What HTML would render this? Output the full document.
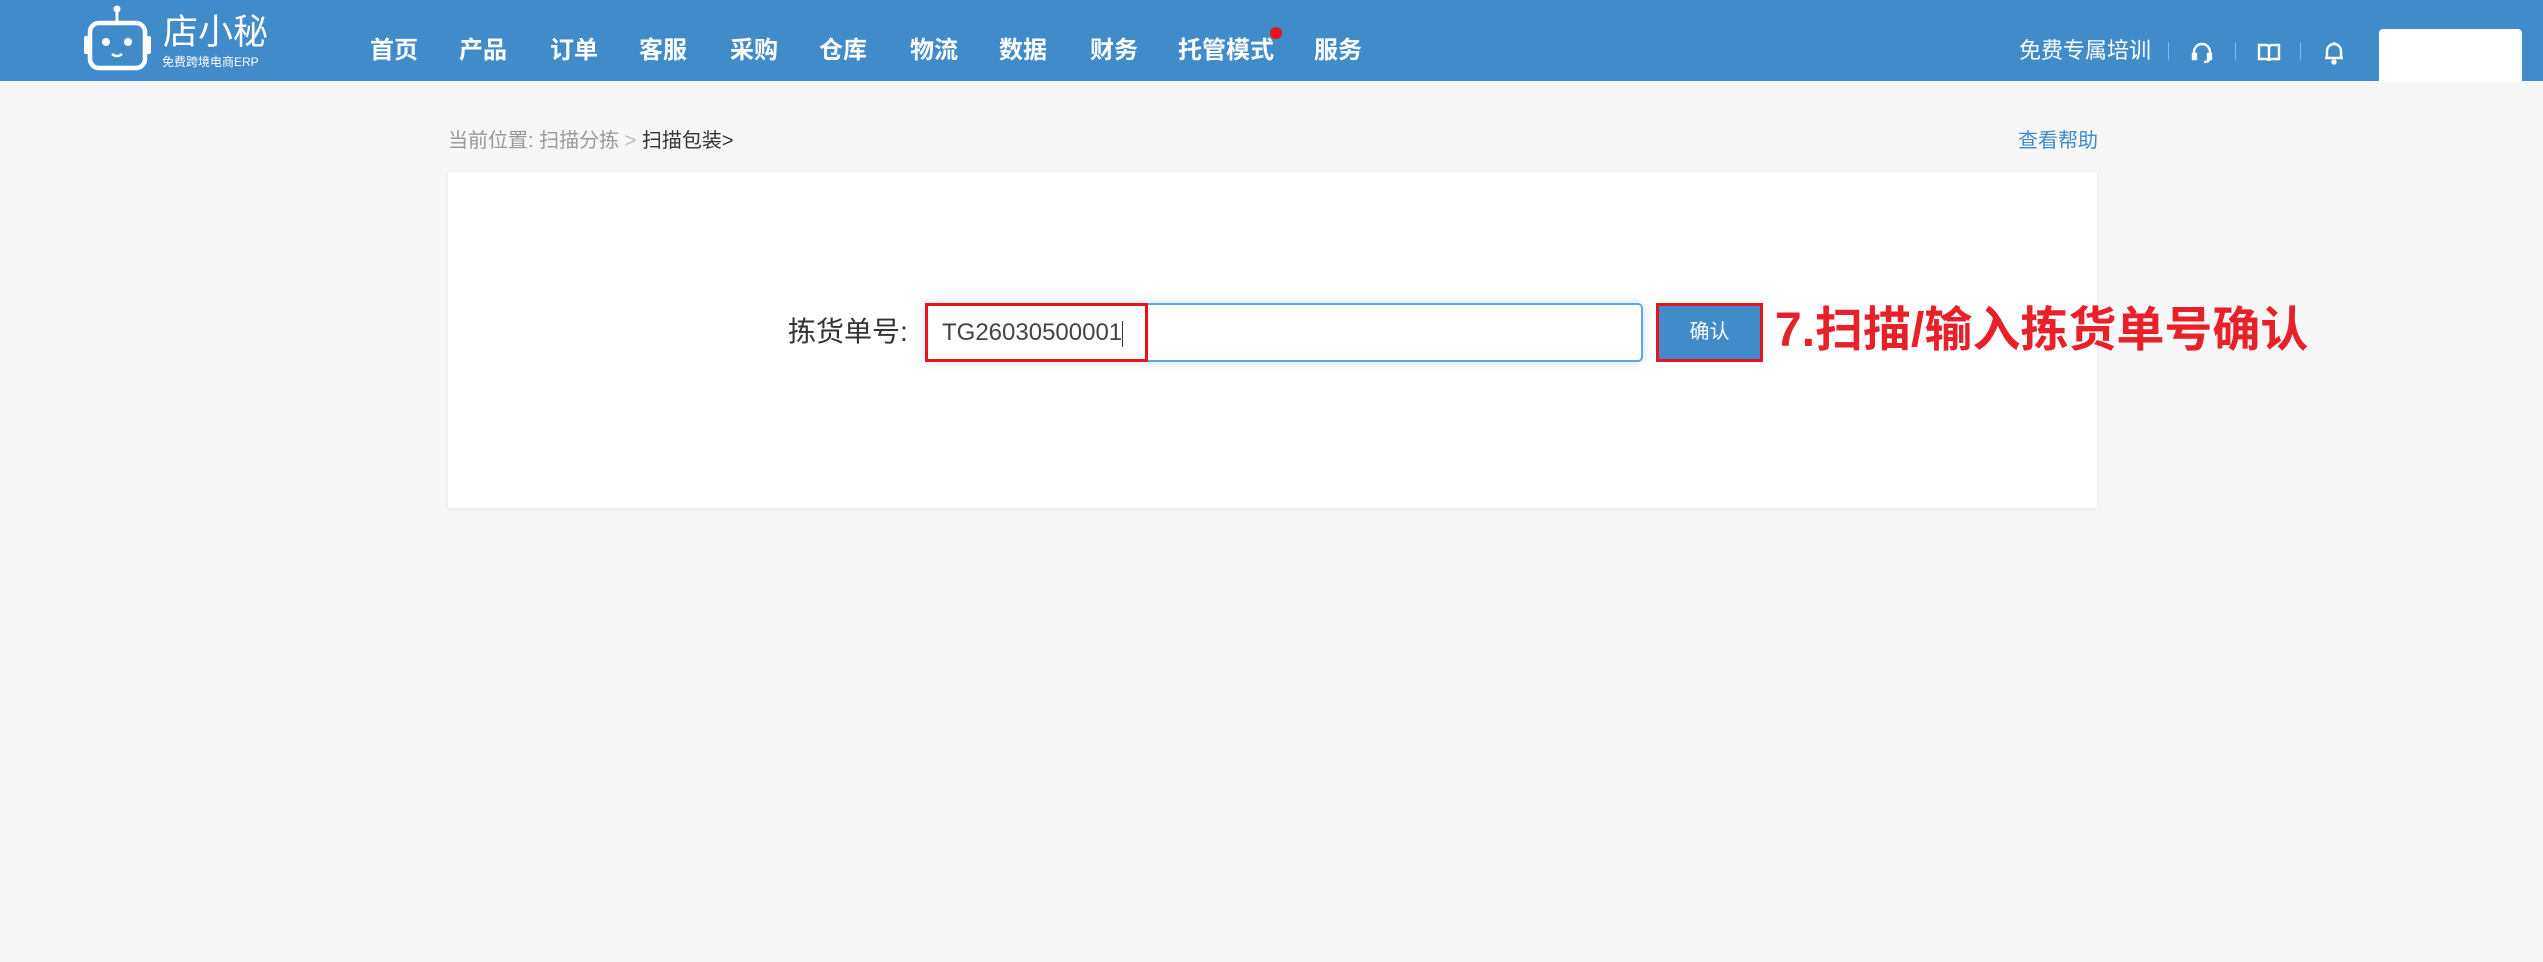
<!DOCTYPE html>
<html><head><meta charset="utf-8">
<style>
*{margin:0;padding:0;box-sizing:border-box}
body{width:2543px;height:962px;background:#f7f7f7;font-family:"Liberation Sans","Noto Sans CJK SC",sans-serif;position:relative;overflow:hidden}
.hdr{position:absolute;left:0;top:0;width:2543px;height:81px;background:#418bca}
.nav{position:absolute;top:35px;color:#fff;font-weight:bold;font-size:24px;line-height:32px;white-space:nowrap}
.abs{position:absolute;white-space:nowrap}
.sep{position:absolute;top:42px;width:1px;height:18px;background:#8fb7df}
</style></head><body>
<div class="hdr">
<svg class="abs" style="left:82px;top:2px" width="72" height="72" viewBox="0 0 72 72">
 <circle cx="35" cy="7" r="3.5" fill="#fff"/>
 <rect x="33.5" y="8" width="3" height="12" fill="#fff"/>
 <rect x="8" y="21" width="55" height="45" rx="9" fill="none" stroke="#fff" stroke-width="4.5"/>
 <rect x="2" y="34" width="5" height="18" rx="2" fill="#fff"/>
 <rect x="64" y="34" width="5" height="18" rx="2" fill="#fff"/>
 <circle cx="24" cy="40" r="4" fill="#fff"/>
 <circle cx="46" cy="40" r="4" fill="#fff"/>
 <path d="M30 52 q5 4 10 0" stroke="#fff" stroke-width="2.5" fill="none"/>
</svg>
<div class="abs" style="left:163px;top:13px;font-size:35px;color:#fff;line-height:40px">店小秘</div>
<div class="abs" style="left:162px;top:55px;font-size:12px;color:#fff;line-height:14px">免费跨境电商ERP</div>
<div class="nav" style="left:370px">首页</div>
<div class="nav" style="left:459px">产品</div>
<div class="nav" style="left:550px">订单</div>
<div class="nav" style="left:639px">客服</div>
<div class="nav" style="left:730px">采购</div>
<div class="nav" style="left:819px">仓库</div>
<div class="nav" style="left:910px">物流</div>
<div class="nav" style="left:999px">数据</div>
<div class="nav" style="left:1090px">财务</div>
<div class="nav" style="left:1178px">托管模式</div>
<div class="abs" style="left:1270px;top:27px;width:12px;height:12px;border-radius:50%;background:#e8141c"></div>
<div class="nav" style="left:1314px">服务</div>
<div class="abs" style="left:2019px;top:37px;font-size:22px;color:#fff;line-height:28px">免费专属培训</div>
<div class="sep" style="left:2168px"></div>
<div class="sep" style="left:2235px"></div>
<div class="sep" style="left:2300px"></div>
<svg class="abs" style="left:2190px;top:41px" width="24" height="24" viewBox="0 0 24 24" fill="none" stroke="#fff" stroke-width="2.4">
 <path d="M4 15 V11 a8 8 0 0 1 16 0 V15"/><rect x="3" y="13" width="3" height="5" fill="#fff"/><rect x="18" y="13" width="3" height="5" fill="#fff"/><path d="M19 18 q0 3 -5 3"/>
</svg>
<svg class="abs" style="left:2257px;top:42px" width="24" height="22" viewBox="0 0 24 22" fill="none" stroke="#fff" stroke-width="2.4">
 <path d="M2 3 h7 q3 0 3 3 q0 -3 3 -3 h7 v14 h-7 q-3 0 -3 2 q0 -2 -3 -2 h-7 z"/><path d="M12 6 v12"/>
</svg>
<svg class="abs" style="left:2323px;top:40px" width="22" height="26" viewBox="0 0 22 26" fill="none" stroke="#fff" stroke-width="2.4">
 <path d="M4 18 V11 a7 7 0 0 1 14 0 V18 z M2 18 h18"/><path d="M11 2 v2"/><circle cx="11" cy="22" r="1.5" fill="#fff"/>
</svg>
<div class="abs" style="left:2379px;top:29px;width:143px;height:53px;background:#fff;border-radius:4px 4px 0 0"></div>
</div>
<div class="abs" style="left:448px;top:128px;font-size:20px;line-height:26px;color:#999">当前位置: 扫描分拣 <span style="color:#bbb">&gt;</span> <span style="color:#333">扫描包装&gt;</span></div>
<div class="abs" style="left:2018px;top:128px;font-size:20px;line-height:26px;color:#418bca">查看帮助</div>
<div class="abs" style="left:448px;top:172px;width:1649px;height:336px;background:#fff;box-shadow:0 1px 4px rgba(0,0,0,.08)"></div>
<div class="abs" style="left:788px;top:314px;font-size:28px;line-height:36px;color:#333">拣货单号:</div>
<div class="abs" style="left:925px;top:303px;width:718px;height:59px;border:2px solid #66a6e0;border-radius:5px;background:#fff;box-shadow:0 0 10px rgba(102,166,224,.35)"></div>
<div class="abs" style="left:925px;top:303px;width:223px;height:59px;border:3px solid #e8141c"></div>
<div class="abs" style="left:942px;top:318px;font-size:24px;line-height:30px;color:#444">TG26030500001<span style="display:inline-block;width:1px;height:26px;background:#333;vertical-align:middle"></span></div>
<div class="abs" style="left:1656px;top:303px;width:107px;height:59px;border:3px solid #e8141c;background:#418bca;color:#fff;font-size:20px;line-height:53px;text-align:center">确认</div>
<div class="abs" style="left:1775px;top:302px;font-size:48px;line-height:58px;font-weight:bold;color:#e8202a">7.扫描/输入拣货单号确认</div>
</body></html>
